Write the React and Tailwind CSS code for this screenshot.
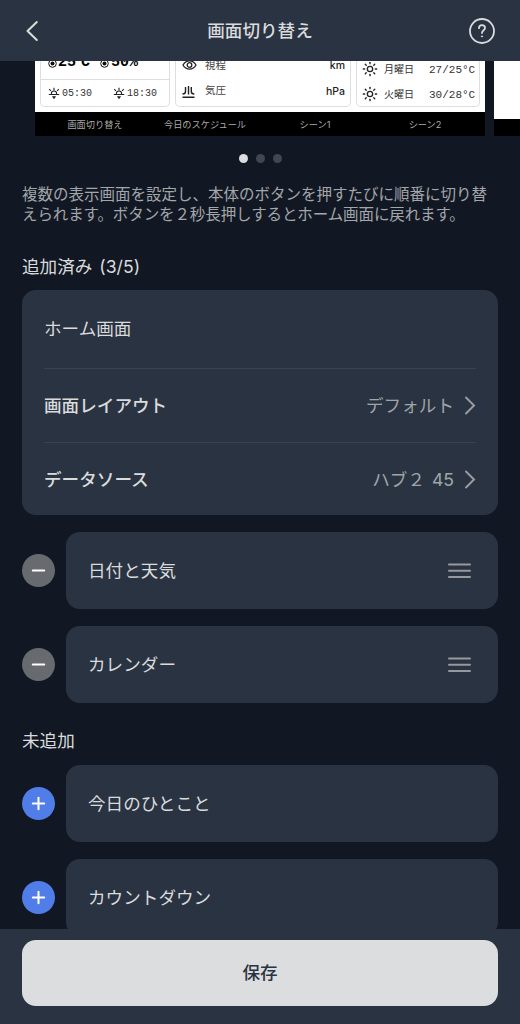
import { Sun } from 'lucide-react'

const added = ['日付と天気', 'カレンダー']
const notAdded = ['今日のひとこと', 'カウントダウン']
const forecast = [
  { day: '月曜日', temp: '27/25°C' },
  { day: '火曜日', temp: '30/28°C' },
]

function Chevron() {
  return (
    <svg width="12" height="20" viewBox="0 0 12 20" fill="none" stroke="#9b9b9f" strokeWidth="2" strokeLinecap="round">
      <path d="M2 1.500 10 9.500 2 17.500" />
    </svg>
  )
}

function Twilight() {
  return (
    <svg width="12" height="13" viewBox="0 0 12 13" fill="none" stroke="#222" strokeWidth="1.100">
      <path d="M.8 7.500h10.400M3.400 7.500V6.600a2.600 2.600 0 0 1 5.200 0v.9M6 .8v2.400M1.300 2.200l1.600 1.800M10.700 2.200 9.100 4" />
      <path d="M3.900 9.300h4.200L6 12.200z" fill="#222" stroke="none" />
    </svg>
  )
}

function Gauge() {
  return (
    <svg width="9" height="9" viewBox="0 0 9 9">
      <circle cx="4.500" cy="4.500" r="3.800" fill="none" stroke="#111" />
      <circle cx="4.500" cy="4.500" r="2" fill="#111" />
    </svg>
  )
}

function Preview() {
  return (
    <div className="flex h-[75px] items-end gap-[9px] overflow-hidden pl-[35px]">
      <div className="w-[450px] shrink-0 bg-white">
        <div className="flex h-[51px] items-end gap-[5px] px-[5px] pb-[5px]">
          <div className="w-[130px] shrink-0 rounded-b-[5px] border border-t-0 border-[#dedede] text-black">
            <div className="flex h-[19px] items-end border-b border-[#dedede] pb-[8px] pl-[7px] font-['Liberation_Mono',monospace] text-[15px] leading-[16px] font-bold">
              <div className="flex w-[52px] items-center gap-px">
                <Gauge />
                <span>25<span className="tracking-[-4px]">°C</span></span>
              </div>
              <div className="flex items-center gap-[2px]">
                <Gauge />
                <span>50%</span>
              </div>
            </div>
            <div className="flex h-[26px] items-center pl-[7px] font-['Liberation_Mono',monospace] text-[10px] text-[#333]">
              <div className="flex w-[65px] items-center gap-[2px]">
                <Twilight />
                <span className="pt-[2px]">05:30</span>
              </div>
              <div className="flex items-center gap-[2px]">
                <Twilight />
                <span className="pt-[2px]">18:30</span>
              </div>
            </div>
          </div>
          <div className="flex w-[176px] shrink-0 flex-col rounded-b-[5px] border border-t-0 border-[#dedede] pr-[5px] pb-[2px] pl-[6px] font-['Inter','Noto_Sans_CJK_JP',sans-serif] text-[10.500px] text-[#222]">
            <div className="flex h-[26px] items-center">
              <svg width="15" height="12" viewBox="0 0 15 12" fill="none" stroke="#222" strokeWidth="1.300">
                <path d="M1 6C4 .5 11 .5 14 6 11 11.500 4 11.500 1 6z" />
                <circle cx="7.500" cy="6" r="2.300" />
              </svg>
              <span className="ml-[8px] pt-px text-[#444]">視程</span>
              <span className="ml-auto pt-px font-medium">km</span>
            </div>
            <div className="flex h-[26px] items-center">
              <svg width="13" height="13" viewBox="0 0 13 13" fill="none" stroke="#222" strokeWidth="1.400">
                <path d="M.5 12.200h12M.5 9C2.800 9 3.500 8.300 3.500 6.500V2M6.500 1v8.500M9.300 2v4.500c0 1.700.8 2.500 3 2.500" />
              </svg>
              <span className="ml-[10px] text-[#444]">気圧</span>
              <span className="ml-auto pt-px font-medium">hPa</span>
            </div>
          </div>
          <div className="w-[124px] shrink-0 rounded-b-[5px] border border-t-0 border-[#dedede] text-[#333]">
            {forecast.map((item) => (
              <div key={item.day} className="flex h-[25px] items-center pl-[5px]">
                <Sun size={16} strokeWidth={2} color="#222" />
                <span className="ml-[6px] w-[45px] font-['Noto_Sans_CJK_JP',sans-serif] text-[10px]">{item.day}</span>
                <span className="pt-[2px] font-['Liberation_Mono',monospace] text-[11px]">{item.temp}</span>
              </div>
            ))}
          </div>
        </div>
        <div className="grid h-[24px] grid-cols-[120px_100px_120px_100px] items-center bg-black text-center text-[9.200px] text-[#aaa]">
          <span>画面切り替え</span>
          <span>今日のスケジュール</span>
          <span>シーン1</span>
          <span>シーン2</span>
        </div>
      </div>
      <div className="h-full w-[26px] shrink-0 bg-white pt-[58px]">
        <div className="h-[17px] bg-black" />
      </div>
    </div>
  )
}

function RoundButton({ plus }) {
  return (
    <button className={plus ? 'size-[33px] shrink-0 rounded-full bg-[#507de8]' : 'size-[33px] shrink-0 rounded-full bg-[#676a6e]'}>
      <svg width="33" height="33" viewBox="0 0 33 33" stroke="#fff" strokeWidth="2" strokeLinecap="round">
        <path d={plus ? 'M10.800 16.500h11.400M16.500 10.800v11.400' : 'M10.800 16.500h11.400'} />
      </svg>
    </button>
  )
}

function ScreenItem({ name, isAdded }) {
  return (
    <div className="flex shrink-0 items-center gap-[11px]">
      <RoundButton plus={!isAdded} />
      <div className="flex h-[77px] flex-1 items-center justify-between rounded-[14px] bg-[#2a3341] pr-[27px] pl-[22px]">
        <span>{name}</span>
        {isAdded && (
          <svg width="23" height="17" viewBox="0 0 23 17" stroke="#98999d" strokeWidth="2" strokeLinecap="round">
            <path d="M1 2.500h21M1 8.800h21M1 15.100h21" />
          </svg>
        )}
      </div>
    </div>
  )
}

function SettingRow({ label, value }) {
  return (
    <div className="flex h-[74px] items-center border-t border-[#3b4350]">
      <span className="font-medium">{label}</span>
      <span className="mr-[10px] ml-auto text-[#a0a5a9] [word-spacing:2px]">{value}</span>
      <Chevron />
    </div>
  )
}

export default function App() {
  return (
    <div className="flex h-[1024px] w-[520px] flex-col overflow-hidden bg-[#121823] font-['Inter','Noto_Sans_CJK_JP',sans-serif] text-[17.600px] leading-[26px] text-[#d9dbdd]">
      <header className="z-10 flex h-[61px] shrink-0 items-center justify-between bg-[#2a3341] px-[25px]">
        <svg width="26" height="26" viewBox="0 0 26 26" fill="none" stroke="#d9dbdd" strokeWidth="2" strokeLinecap="round" strokeLinejoin="round">
          <path d="M11.800 4 2.500 13l9.300 9" />
        </svg>
        <h1 className="font-medium">画面切り替え</h1>
        <svg width="26" height="26" viewBox="0 0 26 26" fill="none" stroke="#d9dbdd" strokeWidth="1.800" strokeLinecap="round">
          <circle cx="13" cy="13" r="12" />
          <path d="M10 10.200c0-2 1.300-3 3-3s3 1.100 3 2.800c0 2.200-3 2.400-3 5" />
          <circle cx="13" cy="18.400" r=".6" fill="#d9dbdd" strokeWidth="1" />
        </svg>
      </header>

      <main className="flex min-h-0 flex-1 flex-col overflow-hidden">
        <div className="shrink-0">
          <Preview />
          <div className="mt-[18px] flex h-[9px] justify-center gap-[8px]">
            <span className="size-[9px] rounded-full bg-[#dcddde]" />
            <span className="size-[9px] rounded-full bg-[#414651]" />
            <span className="size-[9px] rounded-full bg-[#414651]" />
          </div>
        </div>

        <div className="flex shrink-0 flex-col px-[22px]">
          <p className="mt-[22px] text-[15.500px] leading-[20px] whitespace-nowrap text-[#a3a6aa]">
            複数の表示画面を設定し、本体のボタンを押すたびに順番に切り替<br />
            <span className="tracking-[-0.1px]">えられます。ボタンを２秒長押しするとホーム画面に戻れます。</span>
          </p>
          <h2 className="mt-[29px] [word-spacing:2px]">追加済み (3/5)</h2>
          <section className="mt-[10px] h-[225px] rounded-[14px] bg-[#2a3341] px-[22px]">
            <div className="flex h-[78px] items-center">ホーム画面</div>
            <SettingRow label="画面レイアウト" value="デフォルト" />
            <SettingRow label="データソース" value="ハブ２ 45" />
          </section>
          <div className="mt-[17px] flex flex-col gap-[17px]">
            {added.map((name) => (
              <ScreenItem key={name} name={name} isAdded />
            ))}
          </div>
          <h2 className="mt-[25px]">未追加</h2>
          <div className="mt-[11px] flex flex-col gap-[17px]">
            {notAdded.map((name) => (
              <ScreenItem key={name} name={name} />
            ))}
          </div>
        </div>
      </main>

      <footer className="h-[95px] shrink-0 bg-[#2a3341] px-[22px] pt-[11px]">
        <button className="h-[66px] w-full rounded-[14px] bg-[#dcddde] font-medium text-[#2a3341]">保存</button>
      </footer>
    </div>
  )
}
